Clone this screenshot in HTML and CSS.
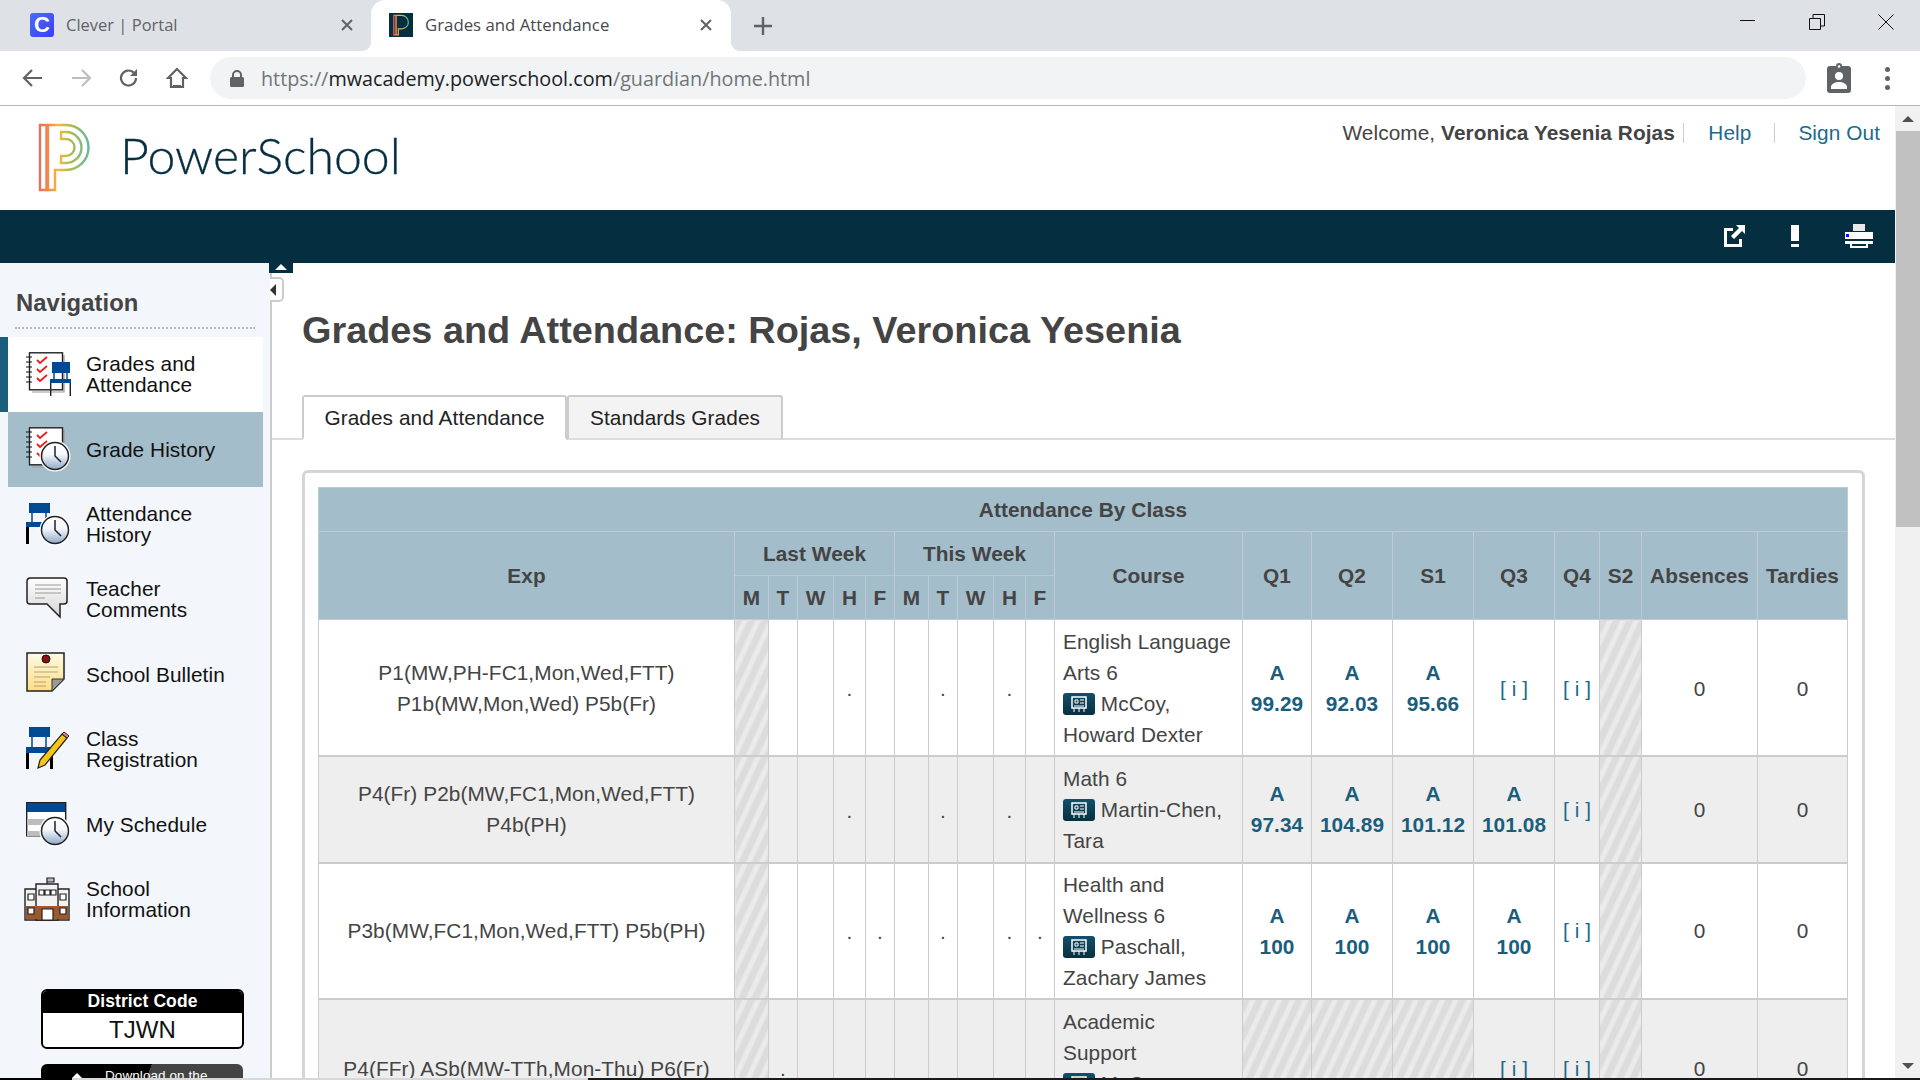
FILE: index.html
```html
<!DOCTYPE html>
<html lang="en">
<head>
    <meta charset="UTF-8">
    <title>Grades and Attendance</title>
    <link rel="stylesheet" href="styles.css">
</head>
<body>
    <!-- shared icon parts -->
    <svg class="defs" width="0" height="0">
        <defs>
            <linearGradient id="clockFill" x1="0" y1="0" x2="0" y2="1">
                <stop offset="0" stop-color="#fff"/><stop offset="0.45" stop-color="#f4f7fb"/><stop offset="1" stop-color="#8fa9c9"/>
            </linearGradient>
            <linearGradient id="bubbleFill" x1="0" y1="0" x2="0" y2="1">
                <stop offset="0" stop-color="#fff"/><stop offset="1" stop-color="#d5d5d5"/>
            </linearGradient>
            <linearGradient id="noteFill" x1="0" y1="0" x2="0" y2="1">
                <stop offset="0" stop-color="#fffbe6"/><stop offset="1" stop-color="#ffdc80"/>
            </linearGradient>
            <linearGradient id="boardFill" x1="0" y1="0" x2="0" y2="1">
                <stop offset="0" stop-color="#134f6b"/><stop offset="1" stop-color="#07303f"/>
            </linearGradient>
            <linearGradient id="logoFill" gradientUnits="userSpaceOnUse" x1="19" y1="0" x2="69" y2="0">
                <stop offset="0" stop-color="#ee6a60"/><stop offset="0.2" stop-color="#f58a4a"/><stop offset="0.38" stop-color="#f5b93a"/><stop offset="0.62" stop-color="#aebd48"/><stop offset="1" stop-color="#66b99c"/>
            </linearGradient>
            <symbol id="notebook" viewBox="0 0 45 45">
                <path d="M38 3v37H6" fill="none" stroke="#999" stroke-width="1.2"/>
                <rect x="3.5" y="0.8" width="33" height="37" fill="#fff" stroke="#222" stroke-width="1.4"/>
                <path d="M0 5h6M0 10h6M0 15h6M0 20h6M0 25h6M0 30h6" stroke="#111" stroke-width="1.2"/>
                <path d="M11 8l3 3 7-6M11 17l3 3 7-6M11 26l3 3 7-6" fill="none" stroke="#f01c1c" stroke-width="1.8"/>
            </symbol>
            <symbol id="clock" viewBox="0 0 45 45">
                <circle cx="29" cy="29" r="15.5" fill="#fff"/>
                <circle cx="29" cy="29" r="13.5" fill="url(#clockFill)" stroke="#222" stroke-width="1.5"/>
                <path d="M29 19v10l6 6" fill="none" stroke="#222" stroke-width="1.5"/>
            </symbol>
            <symbol id="board" viewBox="0 0 32 22">
                <rect width="32" height="22" rx="3" fill="url(#boardFill)"/>
                <path d="M9 4h14v11H9z" fill="none" stroke="#fff" stroke-width="1.5"/>
                <path d="M12 7h3v3h-3zM17 7h4M17 10h4M11 13h10M11 15v4M16 15v4M21 15v4" fill="none" stroke="#fff"/>
            </symbol>
        </defs>
    </svg>

    <div class="screen">
        <div class="tabstrip">
            <div class="browser-tab">
                <span class="favicon clever">C</span>
                <span class="browser-tab-title">Clever | Portal</span>
                <svg class="tab-x" width="14" height="14" viewBox="0 0 14 14"><path d="M2 2l10 10M12 2L2 12"/></svg>
            </div>
            <div class="browser-tab active">
                <span class="favicon ps">
                    <svg width="24" height="24" viewBox="8 2 72 80"><path d="M20 10h7v65h-7zM28 10h18a22.500 22.500 0 0 1 0 45h-11v20h-7z" fill="none" stroke="url(#logoFill)" stroke-width="4"/></svg>
                </span>
                <span class="browser-tab-title">Grades and Attendance</span>
                <svg class="tab-x" width="14" height="14" viewBox="0 0 14 14"><path d="M2 2l10 10M12 2L2 12"/></svg>
            </div>
            <svg class="new-tab" width="18" height="18" viewBox="0 0 18 18"><path d="M9 0v18M0 9h18"/></svg>
            <div class="win-controls">
                <svg width="16" height="16" viewBox="0 0 16 16"><path d="M0 6.5h15"/></svg>
                <svg width="16" height="16" viewBox="0 0 16 16"><path d="M0.5 4.5h11v11h-11zM4 4V0.5h11.5V12H12"/></svg>
                <svg width="16" height="16" viewBox="0 0 16 16"><path d="M0.5 0.5l15 15M15.5 0.5l-15 15"/></svg>
            </div>
        </div>

        <div class="toolbar">
            <div class="nav-buttons">
                <svg width="22" height="20" viewBox="0 0 22 20"><path d="M20 10H3M10 2l-8 8 8 8"/></svg>
                <svg class="off" width="22" height="20" viewBox="0 0 22 20"><path d="M2 10h17M12 2l8 8-8 8"/></svg>
                <svg width="22" height="22" viewBox="0 0 22 22"><path d="M18 11a7.500 7.500 0 1 1-2.300-5.400"/><path class="solid" d="M19 2v7h-7z"/></svg>
                <svg width="22" height="22" viewBox="0 0 22 22"><path d="M11 2L2 11h3v9h12v-9h3zM8 20v-1h6v1"/></svg>
            </div>
            <div class="omnibox">
                <svg class="lock" width="14" height="17" viewBox="0 0 14 17"><path d="M3 7V5a4 4 0 0 1 8 0v2" fill="none" stroke="#5f6368" stroke-width="2"/><rect y="7" width="14" height="10" rx="1.500" fill="#5f6368"/></svg>
                <span class="url"><span class="url-dim">https://</span>mwacademy.powerschool.com<span class="url-dim">/guardian/home.html</span></span>
            </div>
            <svg class="badge" width="24" height="30" viewBox="0 0 24 30"><path d="M3 3h6a3 3 0 0 1 6 0h6a3 3 0 0 1 3 3v21a3 3 0 0 1-3 3H3a3 3 0 0 1-3-3V6a3 3 0 0 1 3-3z" fill="#5f6368"/><circle cx="12" cy="3.500" r="1.300" fill="#fff"/><circle cx="12" cy="13" r="4" fill="#fff"/><path d="M4 26v-2c0-3 4-5 8-5s8 2 8 5v2z" fill="#fff"/></svg>
            <div class="menu-dots"><i></i><i></i><i></i></div>
        </div>

        <div class="window">
            <div class="page">
                <header class="site-header">
                    <svg class="logo" width="80" height="85" viewBox="0 0 80 85" fill="none" stroke="url(#logoFill)" stroke-width="2.400">
                        <path d="M20 10h6.500v65H20z"/>
                        <path d="M28 10h18a22.500 22.500 0 0 1 0 45h-11v20h-7z"/>
                        <path d="M41 17h5a15.500 15.500 0 0 1 0 31h-5v-7h5a8.500 8.500 0 0 0 0-17h-5z"/>
                    </svg>
                    <span class="wordmark">PowerSchool</span>
                    <div class="user-links">
                        <span>Welcome, <b>Veronica Yesenia Rojas</b></span>
                        <i class="sep first"></i>
                        <a href="#">Help</a>
                        <i class="sep second"></i>
                        <a href="#">Sign Out</a>
                    </div>
                </header>

                <div class="band">
                    <svg width="24" height="24" viewBox="0 0 24 24"><path d="M11 4H2v19h18v-8h-3v5H5V7h6z" fill="#fff"/><path d="M14 1h9v9l-3-3-8 8-3-3 8-8z" fill="#fff"/></svg>
                    <svg width="10" height="24" viewBox="0 0 10 24"><path d="M1 1h8v16H1zM1 20h8v3H1z" fill="#fff"/></svg>
                    <svg width="30" height="24" viewBox="0 0 30 24"><path d="M9 0h12v7H9z" fill="#e8e8e8"/><path d="M1 8h28v7H1z" fill="#fff"/><path d="M2 10h3v3H2z" fill="#0a0aee"/><path d="M1 17h28v3h-5v4H6v-4H1zM8 20v2h14v-2z" fill="#fff"/></svg>
                </div>

                <div class="layout">
                    <aside class="sidebar">
                        <span class="collapse-up"></span>
                        <span class="collapse-left"></span>
                        <h2>Navigation</h2>
                        <nav>
                            <a class="nav-item current" href="#">
                                <svg width="45" height="45" viewBox="0 0 45 45">
                                    <use href="#notebook" width="45" height="45"/>
                                    <path d="M28 20v8M41 20v8" stroke="#004a94" stroke-width="1.500"/>
                                    <path d="M26 10h18v11H26z" fill="#004a94"/><path d="M24 27h21v4H24z" fill="#004a94"/>
                                    <path d="M24.700 31v13M44.300 31v13" stroke="#222" stroke-width="1.400"/>
                                </svg>
                                <span class="two">Grades and<br>Attendance</span>
                            </a>
                            <a class="nav-item selected" href="#">
                                <svg width="45" height="45" viewBox="0 0 45 45"><use href="#notebook" width="45" height="45"/><use href="#clock" width="45" height="45"/></svg>
                                <span>Grade History</span>
                            </a>
                            <a class="nav-item" href="#">
                                <svg width="45" height="45" viewBox="0 0 45 45">
                                    <path d="M6 9v11M20 9v11" stroke="#004a94" stroke-width="1.500"/>
                                    <path d="M3 1h21v10H3zM0 20h20v5H0z" fill="#004a94"/><path d="M0 25h3v17H0z" fill="#000"/>
                                    <use href="#clock" width="45" height="45" y="-1"/>
                                </svg>
                                <span class="two">Attendance<br>History</span>
                            </a>
                            <a class="nav-item" href="#">
                                <svg width="45" height="45" viewBox="0 0 45 45">
                                    <path d="M4 1h34a3 3 0 0 1 3 3v20a3 3 0 0 1-3 3h-4v13L21 27H4a3 3 0 0 1-3-3V4a3 3 0 0 1 3-3z" fill="url(#bubbleFill)" stroke="#222" stroke-width="1.500"/>
                                    <path d="M9 8h26M9 12h26M9 16h26M9 21h10" stroke="#999" stroke-width="1.200"/>
                                </svg>
                                <span class="two">Teacher<br>Comments</span>
                            </a>
                            <a class="nav-item" href="#">
                                <svg width="45" height="45" viewBox="0 0 45 45">
                                    <path d="M1 1h37v26L26 39H1z" fill="url(#noteFill)" stroke="#222" stroke-width="1.500"/>
                                    <path d="M38 27L26 39V27z" fill="#999" stroke="#333"/>
                                    <path d="M8 15h24M8 20h24M8 25h16M8 30h12M8 34h12" stroke="#b3a27a" stroke-width="1.200"/>
                                    <circle cx="20" cy="7" r="4" fill="#8c1010" stroke="#111"/>
                                </svg>
                                <span>School Bulletin</span>
                            </a>
                            <a class="nav-item" href="#">
                                <svg width="45" height="45" viewBox="0 0 45 45">
                                    <path d="M6 9v11M20 9v11" stroke="#004a94" stroke-width="1.500"/>
                                    <path d="M3 0h21v10H3zM0 20h27v6H0z" fill="#004a94"/><path d="M0 26h3v16H0zM24 26h3v16h-3z" fill="#000"/>
                                    <path d="M36 7l5 4-22 27-7 3 2-8z" fill="#f5c518" stroke="#222" stroke-width="1.200"/>
                                    <path d="M36 7l2-2 5 4-2 2z" fill="#ee8080" stroke="#222"/>
                                </svg>
                                <span class="two">Class<br>Registration</span>
                            </a>
                            <a class="nav-item" href="#">
                                <svg width="45" height="45" viewBox="0 0 45 45">
                                    <path d="M0.700 0.700h39v33h-39z" fill="#fff" stroke="#222" stroke-width="1.400"/>
                                    <path d="M1 1h38v9H1z" fill="#004a94"/><path d="M1 17h38v6H1zM1 29h38v5H1z" fill="#bdbdbd"/>
                                    <use href="#clock" width="45" height="45"/>
                                </svg>
                                <span>My Schedule</span>
                            </a>
                            <a class="nav-item" href="#">
                                <svg class="school" width="48" height="45" viewBox="0 0 48 45">
                                    <path d="M24 12V1h7v4h-7" fill="#bbb" stroke="#222" stroke-width="1.200"/>
                                    <path d="M2 12h44v31H2z" fill="#f2f2f2" stroke="#222" stroke-width="1.400"/>
                                    <path d="M13 7h22v36H13z" fill="#f2f2f2" stroke="#222" stroke-width="1.400"/>
                                    <path d="M3 29h42v13H3z" fill="#9c5a2c"/>
                                    <path d="M5 17h6v6H5zM37 17h6v6h-6zM16 13h5v5h-5zM22 13h5v5h-5zM28 13h5v5h-5zM5 31h6v6H5zM37 31h6v6h-6z" fill="#fff" stroke="#222" stroke-width="1.200"/>
                                    <path d="M19 32h11v11H19z" fill="#fff" stroke="#222" stroke-width="1.200"/>
                                </svg>
                                <span class="two">School<br>Information</span>
                            </a>
                        </nav>
                        <div class="district-code">
                            <div class="district-label">District Code</div>
                            <div class="district-value">TJWN</div>
                        </div>
                        <div class="store-badge"><span class="store-apple"></span>Download on the</div>
                    </aside>

                    <main class="content">
                        <h1>Grades and Attendance: Rojas, Veronica Yesenia</h1>
                        <div class="tabs">
                            <a class="tab active" href="#">Grades and Attendance</a>
                            <a class="tab" href="#">Standards Grades</a>
                        </div>
                        <div class="panel">
                            <table class="grades">
                                <colgroup>
                                    <col class="w416"><col class="w34"><col class="w29"><col class="w36"><col class="w32"><col class="w29"><col class="w34"><col class="w29"><col class="w36"><col class="w32"><col class="w29"><col class="w188"><col class="w69"><col class="w81"><col class="w81"><col class="w81"><col class="w45"><col class="w42"><col class="w116"><col class="w90">
                                </colgroup>
                                <thead>
                                    <tr class="h44"><th colspan="20">Attendance By Class</th></tr>
                                    <tr class="h44">
                                        <th rowspan="2">Exp</th>
                                        <th colspan="5">Last Week</th>
                                        <th colspan="5">This Week</th>
                                        <th rowspan="2">Course</th>
                                        <th rowspan="2">Q1</th><th rowspan="2">Q2</th><th rowspan="2">S1</th><th rowspan="2">Q3</th><th rowspan="2">Q4</th><th rowspan="2">S2</th>
                                        <th rowspan="2">Absences</th><th rowspan="2">Tardies</th>
                                    </tr>
                                    <tr class="h44">
                                        <th>M</th><th>T</th><th>W</th><th>H</th><th>F</th><th>M</th><th>T</th><th>W</th><th>H</th><th>F</th>
                                    </tr>
                                </thead>
                                <tbody>
                                    <tr class="nudge">
                                        <td>P1(MW,PH-FC1,Mon,Wed,FTT)<br>P1b(MW,Mon,Wed) P5b(Fr)</td>
                                        <td class="na"></td><td></td><td></td><td class="dot">.</td><td></td><td></td><td class="dot">.</td><td></td><td class="dot">.</td><td></td>
                                        <td class="course">English Language<br>Arts 6<br><svg class="teacher"><use href="#board"/></svg> McCoy,<br>Howard Dexter</td>
                                        <td class="grade">A<br>99.29</td><td class="grade">A<br>92.03</td><td class="grade">A<br>95.66</td>
                                        <td class="info">[ i ]</td><td class="info">[ i ]</td><td class="na"></td>
                                        <td>0</td><td>0</td>
                                    </tr>
                                    <tr class="alt">
                                        <td>P4(Fr) P2b(MW,FC1,Mon,Wed,FTT)<br>P4b(PH)</td>
                                        <td class="na"></td><td></td><td></td><td class="dot">.</td><td></td><td></td><td class="dot">.</td><td></td><td class="dot">.</td><td></td>
                                        <td class="course">Math 6<br><svg class="teacher"><use href="#board"/></svg> Martin-Chen,<br>Tara</td>
                                        <td class="grade">A<br>97.34</td><td class="grade">A<br>104.89</td><td class="grade">A<br>101.12</td><td class="grade">A<br>101.08</td>
                                        <td class="info">[ i ]</td><td class="na"></td>
                                        <td>0</td><td>0</td>
                                    </tr>
                                    <tr>
                                        <td>P3b(MW,FC1,Mon,Wed,FTT) P5b(PH)</td>
                                        <td class="na"></td><td></td><td></td><td class="dot">.</td><td class="dot">.</td><td></td><td class="dot">.</td><td></td><td class="dot">.</td><td class="dot">.</td>
                                        <td class="course">Health and<br>Wellness 6<br><svg class="teacher"><use href="#board"/></svg> Paschall,<br>Zachary James</td>
                                        <td class="grade">A<br>100</td><td class="grade">A<br>100</td><td class="grade">A<br>100</td><td class="grade">A<br>100</td>
                                        <td class="info">[ i ]</td><td class="na"></td>
                                        <td>0</td><td>0</td>
                                    </tr>
                                    <tr class="alt nudge">
                                        <td>P4(FFr) ASb(MW-TTh,Mon-Thu) P6(Fr)</td>
                                        <td class="na"></td><td class="dot">.</td><td></td><td></td><td></td><td></td><td></td><td></td><td></td><td></td>
                                        <td class="course">Academic<br>Support<br><svg class="teacher"><use href="#board"/></svg> McCoy,<br>Howard Dexter</td>
                                        <td class="na"></td><td class="na"></td><td class="na"></td>
                                        <td class="info">[ i ]</td><td class="info">[ i ]</td><td class="na"></td>
                                        <td>0</td><td>0</td>
                                    </tr>
                                </tbody>
                            </table>
                        </div>
                    </main>
                </div>
            </div>

            <div class="scrollbar">
                <div class="scroll-arrow"><i class="arrow-up"></i></div>
                <div class="scroll-thumb"></div>
                <div class="scroll-rest"></div>
                <div class="scroll-arrow"><i class="arrow-down"></i></div>
            </div>
        </div>

        <div class="taskbar"><i class="task-a"></i><i class="task-b"></i><i class="task-c"></i></div>
    </div>
</body>
</html>
```

FILE: styles.css
```css
* {
    box-sizing: border-box;
}
html, body {
    margin: 0;
    height: 100%;
    overflow: hidden;
}
body {
    font-family: "Liberation Sans", Arial, sans-serif;
    font-size: 20.8px;
    letter-spacing: 0.08px;
    color: #444;
    background-color: #fff;
}
a {
    text-decoration: none;
}
.defs {
    display: block;
    height: 0;
}
.screen {
    height: 1080px;
    display: flex;
    flex-direction: column;
}

/* browser chrome */
.tabstrip {
    height: 51px;
    flex: none;
    display: flex;
    align-items: stretch;
    background-color: #dee1e6;
    font-family: "Open Sans", sans-serif;
    font-size: 16.5px;
    letter-spacing: 0;
    padding-left: 8px;
}
.browser-tab {
    width: 363px;
    display: flex;
    align-items: center;
    padding: 0 17px 2px 22px;
    color: #5f6368;
    position: relative;
}
.browser-tab.active {
    width: 360px;
    padding: 0 18px 2px;
    background-color: #fff;
    border-radius: 14px 14px 0 0;
    color: #45494e;
    font-size: 16.8px;
}
.browser-tab.active::before,
.browser-tab.active::after {
    content: "";
    position: absolute;
    bottom: 0;
    width: 10px;
    height: 10px;
}
.browser-tab.active::before {
    left: -10px;
    background: radial-gradient(circle at 0 0, #dee1e6 10px, #fff 10.5px);
}
.browser-tab.active::after {
    right: -10px;
    background: radial-gradient(circle at 100% 0, #dee1e6 10px, #fff 10.5px);
}
.favicon {
    width: 24px;
    height: 24px;
    flex: none;
    display: flex;
    align-items: center;
    justify-content: center;
    margin-right: 12px;
}
.favicon.clever {
    background: linear-gradient(135deg, #4a6cf7, #3b3ff5);
    border-radius: 3px;
    color: #fff;
    font-family: "Liberation Sans", sans-serif;
    font-weight: bold;
    font-size: 22px;
}
.favicon.ps {
    background-color: #052e40;
}
.browser-tab-title {
    flex: 1;
    white-space: nowrap;
}
.tab-x {
    fill: none;
    stroke: #5f6368;
    stroke-width: 2;
}
.new-tab {
    align-self: center;
    margin-left: 23px;
    fill: none;
    stroke: #5f6368;
    stroke-width: 2.4;
}
.win-controls {
    margin-left: auto;
    display: flex;
    gap: 53px;
    padding: 14px 26px 0 0;
}
.win-controls svg {
    fill: none;
    stroke: #111;
    stroke-width: 1;
}
.toolbar {
    height: 55px;
    flex: none;
    display: flex;
    align-items: center;
    background-color: #fff;
    border-bottom: 1px solid #b5b5b5;
}
.nav-buttons {
    width: 210px;
    flex: none;
    display: flex;
    align-items: center;
    gap: 26px;
    padding-left: 22px;
}
.nav-buttons svg {
    fill: none;
    stroke: #5f6368;
    stroke-width: 2.200;
}
.nav-buttons svg.off {
    stroke: #bcbec1;
}
.nav-buttons .solid {
    fill: #5f6368;
    stroke: none;
}
.omnibox {
    width: 1596px;
    height: 42px;
    flex: none;
    display: flex;
    align-items: center;
    padding-left: 20px;
    background-color: #f1f3f4;
    border-radius: 21px;
    font-family: "Open Sans", sans-serif;
    font-size: 19.750px;
    letter-spacing: 0;
    color: #202124;
}
.lock {
    margin-right: 17px;
}
.url-dim {
    color: #70757a;
}
.badge {
    margin-left: 21px;
}
.menu-dots {
    margin-left: 34px;
    display: flex;
    flex-direction: column;
    gap: 4px;
}
.menu-dots i {
    width: 5px;
    height: 5px;
    border-radius: 50%;
    background-color: #5f6368;
}

/* page */
.window {
    flex: 1;
    min-height: 0;
    display: flex;
    overflow: hidden;
}
.page {
    flex: 1;
    min-width: 0;
    display: flex;
    flex-direction: column;
}
.site-header {
    height: 104px;
    flex: none;
    display: flex;
    align-items: flex-start;
    padding: 9px 15px 0 20px;
}
.wordmark {
    margin: 10px 0 0 20px;
    font-family: Lato, sans-serif;
    font-weight: 300;
    font-size: 50px;
    line-height: 60px;
    letter-spacing: 0;
    color: #052e40;
    -webkit-text-stroke: 0.3px #052e40;
}
.user-links {
    margin: 0 0 0 auto;
    display: flex;
    align-items: center;
    height: 36px;
}
.user-links a {
    color: #1d6a8c;
}
.sep {
    width: 1px;
    height: 20px;
    background-color: #ccc;
}
.sep.first {
    margin: 0 24.500px 0 8px;
}
.sep.second {
    margin: 0 23.500px 0 22.500px;
}
.band {
    height: 53px;
    flex: none;
    display: flex;
    align-items: center;
    justify-content: flex-end;
    gap: 44px;
    padding: 0 21px 2px 0;
    background-color: #052e40;
}
.layout {
    flex: 1;
    min-height: 0;
    display: flex;
}

/* sidebar */
.sidebar {
    width: 272px;
    flex: none;
    position: relative;
    background-color: #f3f6fa;
    border-right: 2px solid #ccc;
}
.collapse-up {
    position: absolute;
    top: 0;
    left: 269px;
    width: 24px;
    height: 10px;
    background-color: #052e40;
}
.collapse-up::after {
    content: "";
    position: absolute;
    left: 6px;
    top: 1px;
    border: 6px solid transparent;
    border-top: 0;
    border-bottom-color: #fff;
}
.collapse-left {
    position: absolute;
    top: 14px;
    left: 270px;
    width: 14px;
    height: 25px;
    background-color: #fff;
    border: 2px solid #ccc;
    border-left: 0;
    border-radius: 0 5px 5px 0;
}
.collapse-left::after {
    content: "";
    position: absolute;
    left: 0;
    top: 5px;
    border: 6px solid transparent;
    border-left: 0;
    border-right-color: #333;
}
.sidebar h2 {
    margin: 25px 15px 8px;
    padding: 0 0 10px 1px;
    font-size: 23.800px;
    line-height: 29px;
    border-bottom: 2px dotted #bbb;
    color: #444;
}
.nav-item {
    height: 75px;
    margin: 0 7px 0 8px;
    padding-left: 18px;
    display: flex;
    align-items: center;
    gap: 15px;
    line-height: 21px;
    color: #111;
}
.nav-item svg {
    flex: none;
}
.nav-item .two {
    margin-top: -2px;
}
.nav-item .school {
    margin-left: -3px;
}
.nav-item.current {
    background-color: #fff;
    box-shadow: -8px 0 0 #1a5e7c;
}
.nav-item.selected {
    background-color: #a4bdca;
}
.district-code {
    width: 203px;
    height: 60px;
    margin: 52px 0 0 41px;
    background-color: #fff;
    border: 2px solid #000;
    border-radius: 6px;
    text-align: center;
    overflow: hidden;
}
.district-label {
    height: 22px;
    background-color: #000;
    color: #fff;
    font-weight: bold;
    font-size: 17.500px;
    line-height: 20px;
}
.district-value {
    font-size: 24px;
    line-height: 34px;
    color: #111;
}
.store-badge {
    width: 202px;
    height: 50px;
    margin: 15px 0 0 41px;
    padding: 4px 0 0 64px;
    background: linear-gradient(112deg, #000 0 50%, #444 50%);
    border-radius: 6px;
    color: #fff;
    font-size: 13.500px;
    position: relative;
}
.store-apple {
    position: absolute;
    left: 30px;
    top: 9px;
    border: 6px solid transparent;
    border-top: 0;
    border-bottom-color: #fff;
}

/* main content */
.content {
    flex: 1;
    min-width: 0;
}
.content h1 {
    margin: 45px 0 43px 30px;
    font-size: 37.850px;
    line-height: 44px;
    letter-spacing: 0;
    color: #444;
}
.tabs {
    height: 45px;
    display: flex;
    padding-left: 30px;
    border-bottom: 2px solid #ddd;
}
.tab {
    height: 45px;
    display: flex;
    align-items: center;
    justify-content: center;
    background-color: #f3f3f3;
    border: 2px solid #ccc;
    border-bottom-color: #ddd;
    border-radius: 3px 3px 0 0;
    width: 216px;
    color: #222;
}
.tab.active {
    width: 265px;
    background-color: #fff;
    border-bottom-color: #fff;
}
.panel {
    margin: 30px 30px 0 30px;
    padding: 14px 14px 14px 13px;
    border: 3px solid #d5d5d5;
    border-radius: 6px;
}
.grades {
    width: 1530px;
    table-layout: fixed;
    border-collapse: collapse;
    text-align: center;
}
.grades th,
.grades td {
    padding: 0;
    line-height: 31px;
    border: 1px solid #ccc;
}
.grades thead th {
    background-color: #a4bdca;
    border-color: #bccbd4;
    font-weight: bold;
    color: #444;
}
.grades tbody tr {
    height: 136px;
    border-bottom: 2px solid #ccc;
}
.grades tbody tr.alt {
    height: 107px;
    background-color: #eee;
}
.grades tbody tr.alt.nudge {
    height: 137px;
}
.grades tr.nudge td {
    padding-top: 2px;
}
.h44 {
    height: 44px;
}
.w416 { width: 416px; }
.w188 { width: 188px; }
.w116 { width: 116px; }
.w90 { width: 90px; }
.w81 { width: 81px; }
.w69 { width: 69px; }
.w45 { width: 45px; }
.w42 { width: 42px; }
.w36 { width: 36px; }
.w34 { width: 34px; }
.w32 { width: 32px; }
.w29 { width: 29px; }
.grades td.na {
    background: repeating-linear-gradient(115deg, #dcdcdc 0, #dcdcdc 5px, #ebebeb 7px, #ebebeb 10px, #dcdcdc 12px);
}
.grades td.course {
    padding-left: 8px;
    padding-right: 8px;
    text-align: left;
}
.grades td.grade {
    font-weight: bold;
    color: #1a5e7c;
}
.grades td.info {
    color: #1d6a8c;
}
.grades td.dot {
    padding-top: 2px;
}
.teacher {
    width: 32px;
    height: 22px;
    vertical-align: -4px;
}

/* fake scrollbar */
.scrollbar {
    width: 25px;
    flex: none;
    display: flex;
    flex-direction: column;
    background-color: #f1f1f1;
}
.scroll-arrow {
    height: 25px;
    flex: none;
    display: flex;
    align-items: center;
    justify-content: center;
}
.arrow-up {
    border: 6px solid transparent;
    border-top: 0;
    border-bottom-color: #505050;
}
.arrow-down {
    border: 6px solid transparent;
    border-bottom: 0;
    border-top-color: #505050;
}
.scroll-thumb {
    height: 396px;
    flex: none;
    margin-left: 1px;
    background-color: #c1c1c1;
}
.scroll-rest {
    flex: 1;
}
.taskbar {
    height: 2px;
    flex: none;
    display: flex;
    background-color: #1a1a1a;
}
.task-a {
    width: 72px;
    background-color: #000;
}
.task-b {
    width: 516px;
    background-color: #d8d8d8;
}
.task-c {
    flex: 1;
}
```
